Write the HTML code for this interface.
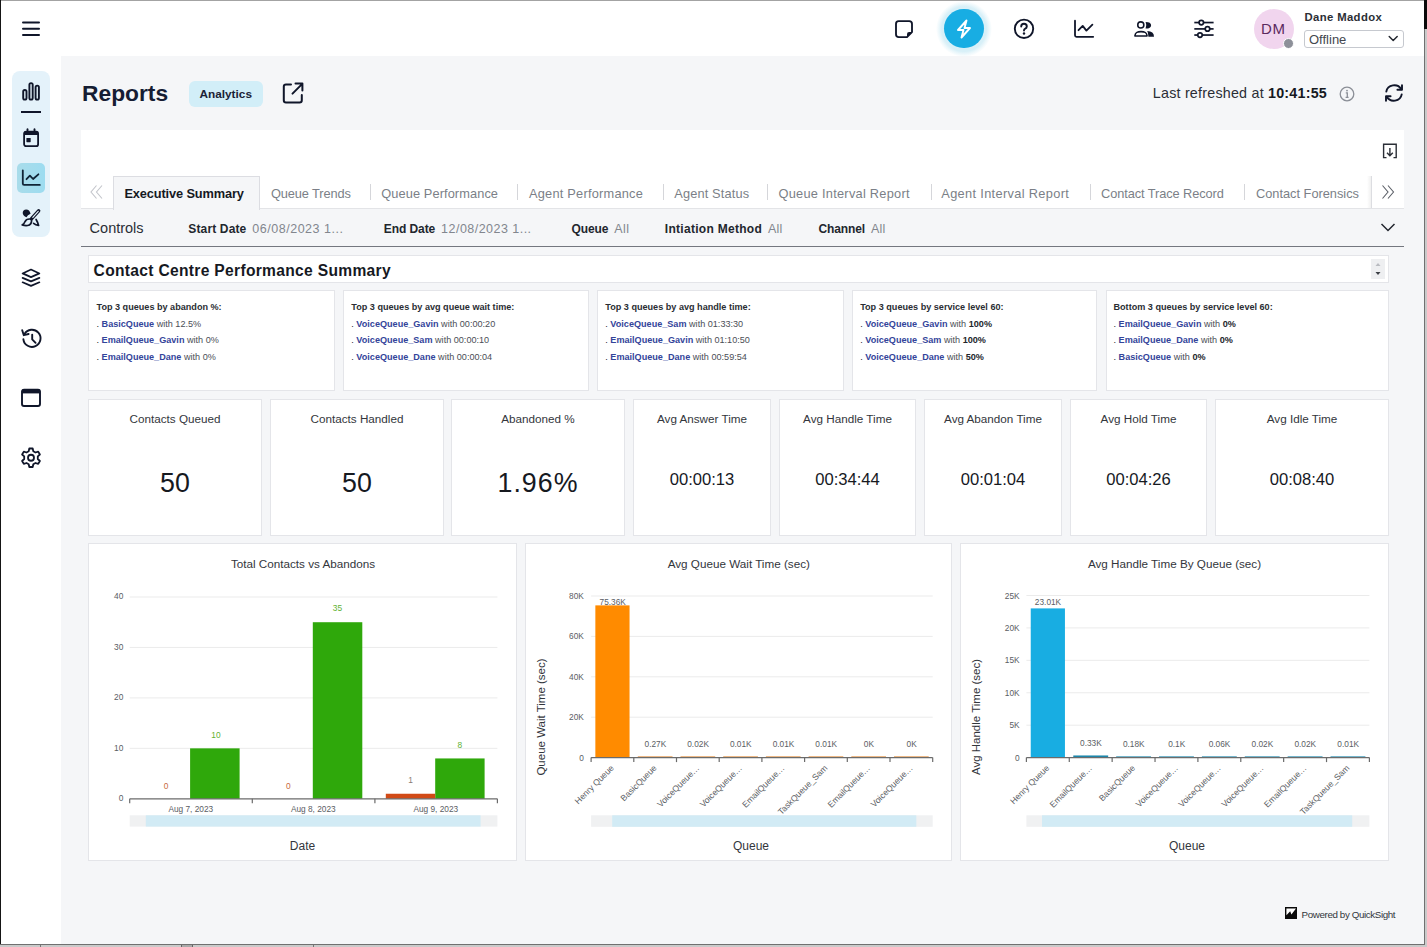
<!DOCTYPE html>
<html><head><meta charset="utf-8">
<style>
*{margin:0;padding:0;box-sizing:border-box}
html,body{width:1427px;height:947px;overflow:hidden;background:#d6d6d6;font-family:"Liberation Sans",sans-serif;color:#16191f;position:relative}
.a{position:absolute}
.t{position:absolute;white-space:nowrap;line-height:1}
svg{position:absolute;overflow:visible}
.card{position:absolute;background:#fff;border:1px solid #e4e5e9}
</style></head><body>
<div class="a" style="left:0;top:0;width:1425px;height:945px;background:#f5f6f8"></div>
<div class="a" style="left:0;top:0;width:1425px;height:56px;background:#fff"></div>
<div class="a" style="left:0;top:56px;width:60.5px;height:889px;background:#fff"></div>
<!-- hamburger -->
<svg style="left:0;top:0" width="60" height="56"><g stroke="#10162a" stroke-width="2" stroke-linecap="round"><line x1="23" y1="22.4" x2="39" y2="22.4"/><line x1="23" y1="28.7" x2="39" y2="28.7"/><line x1="23" y1="34.9" x2="39" y2="34.9"/></g></svg>
<!-- header icons -->
<!-- note -->
<svg style="left:894px;top:19px" width="22" height="20" viewBox="0 0 22 20"><path d="M4.6 2.1 H15.2 Q18 2.1 18 4.9 V13.1 L13 18.1 H4.8 Q2 18.1 2 15.3 V4.9 Q2 2.1 4.6 2.1 Z" fill="none" stroke="#10162a" stroke-width="1.85" stroke-linejoin="round"/><path d="M18 13.1 L13 18.1 V15.2 Q13 13.1 15.1 13.1 Z" fill="#10162a"/></svg>
<!-- lightning circle -->
<div class="a" style="left:936px;top:0.65px;width:56px;height:56px;border-radius:50%;background:radial-gradient(circle closest-side,#d6eff8 0%,#d8f0f8 80%,rgba(230,245,250,0.7) 90%,rgba(255,255,255,0) 100%)"></div>
<div class="a" style="left:944.3px;top:9.05px;width:39.3px;height:39.3px;border-radius:50%;background:#18ade3"></div>
<svg style="left:953px;top:18px" width="22" height="22" viewBox="0 0 22 22"><path d="M13.5 2.5 L5 12 H10.5 L8.5 19.5 L17 10 H11.5 Z" fill="none" stroke="#fff" stroke-width="1.9" stroke-linejoin="round"/></svg>
<!-- help -->
<svg style="left:1013px;top:18px" width="22" height="22" viewBox="0 0 22 22"><circle cx="11" cy="10.8" r="9.2" fill="none" stroke="#10162a" stroke-width="1.9"/><path d="M8.2 8.6 Q8.2 5.8 11 5.8 Q13.8 5.8 13.8 8.4 Q13.8 10 11.9 10.8 Q11 11.2 11 12.6" fill="none" stroke="#10162a" stroke-width="1.9" stroke-linecap="round"/><circle cx="11" cy="15.5" r="1.2" fill="#10162a"/></svg>
<!-- chart -->
<svg style="left:1073px;top:19px" width="22" height="20" viewBox="0 0 22 20"><path d="M2 1.7 V16.3 Q2 17.8 3.5 17.8 H20.2" fill="none" stroke="#10162a" stroke-width="1.8" stroke-linecap="round" stroke-linejoin="round"/><path d="M5.5 11.2 L9.7 6.9 L13.4 11.6 L19.4 5.6" fill="none" stroke="#10162a" stroke-width="1.8" stroke-linecap="round" stroke-linejoin="round"/></svg>
<!-- people -->
<svg style="left:1133px;top:20px" width="22" height="19" viewBox="0 0 22 19"><circle cx="7.8" cy="4.9" r="3.05" fill="none" stroke="#10162a" stroke-width="1.55"/><path d="M1.9 15.9 C2.4 12.4 4 11.6 8 11.6 C12 11.6 13.6 12.4 14.1 15.9 Z" fill="none" stroke="#10162a" stroke-width="1.55" stroke-linejoin="round"/><path d="M12.6 1.9 Q18.1 1.9 18.1 5.25 Q18.1 8.6 12.6 8.6 Q14.1 5.25 12.6 1.9 Z" fill="#10162a"/><path d="M14.2 11.1 Q21 11.4 21 16.7 H15.4 Q15.4 13 14.2 11.1 Z" fill="#10162a"/></svg>
<!-- sliders -->
<svg style="left:1193px;top:19px" width="22" height="20" viewBox="0 0 22 20"><g stroke="#10162a" stroke-width="1.7" fill="#fff"><line x1="1.3" y1="3.55" x2="20.6" y2="3.55"/><line x1="1.3" y1="9.9" x2="20.6" y2="9.9"/><line x1="1.3" y1="16.05" x2="20.6" y2="16.05"/><circle cx="8.3" cy="3.55" r="2.25"/><circle cx="14.5" cy="9.9" r="2.25"/><circle cx="7.0" cy="16.05" r="2.25"/></g></svg>
<!-- avatar -->
<div class="a" style="left:1254px;top:9px;width:40px;height:40px;border-radius:50%;background:#f1d5ee"></div>
<div class="t" style="left:1261px;top:20.8px;font-size:15px;letter-spacing:0.7px;color:#5b2a5e">DM</div>
<div class="a" style="left:1282.5px;top:37.5px;width:11px;height:11px;border-radius:50%;background:#8d9099;border:1px solid #fff"></div>
<div class="t" style="left:1304.5px;top:12.1px;font-size:11.3px;letter-spacing:0.38px;font-weight:bold;color:#2b2e35">Dane Maddox</div>
<div class="a" style="left:1304px;top:30px;width:100px;height:18px;border:1px solid #c6c9cf;border-radius:3px;background:#fff"></div>
<div class="t" style="left:1309px;top:32.5px;font-size:13px;color:#44474e">Offline</div>
<svg style="left:1387px;top:34px" width="12" height="9" viewBox="0 0 12 9"><path d="M2.2 2.4 L6.2 6.4 L10.2 2.4" fill="none" stroke="#22262e" stroke-width="1.45" stroke-linecap="round" stroke-linejoin="round"/></svg>


<!-- sidebar pill -->
<div class="a" style="left:12px;top:71px;width:38px;height:166px;border-radius:8px;background:#e4f2fa"></div>
<!-- bars icon -->
<svg style="left:20px;top:80px" width="22" height="35" viewBox="0 0 22 35"><g fill="none" stroke="#10162a" stroke-width="1.9"><rect x="3.2" y="10" width="3.3" height="9.6" rx="1.6"/><rect x="9.4" y="3.1" width="3.3" height="16.5" rx="1.6"/><rect x="15.6" y="5.6" width="3.3" height="14" rx="1.6"/></g><rect x="1" y="31" width="20" height="2" fill="#10162a"/></svg>
<!-- calendar -->
<svg style="left:22px;top:128px" width="18" height="20" viewBox="0 0 18 20"><rect x="2.1" y="3.6" width="14" height="14.6" rx="2" fill="none" stroke="#10162a" stroke-width="1.8"/><rect x="2.1" y="3.6" width="14" height="3.4" fill="#10162a"/><line x1="5.5" y1="1.2" x2="5.5" y2="4" stroke="#10162a" stroke-width="1.8" stroke-linecap="round"/><line x1="12.5" y1="1.2" x2="12.5" y2="4" stroke="#10162a" stroke-width="1.8" stroke-linecap="round"/><rect x="4.4" y="9.9" width="4.3" height="4.3" rx="0.6" fill="#10162a"/></svg>
<!-- selected -->
<div class="a" style="left:16.8px;top:163px;width:28.5px;height:29.7px;border-radius:5px;background:linear-gradient(to right,#a9dcea,#9ddcf0)"></div>
<svg style="left:21px;top:169px" width="20" height="18" viewBox="0 0 20 18"><path d="M1.8 1.3 V14.6 Q1.8 15.9 3.1 15.9 H18.8" fill="none" stroke="#0f2436" stroke-width="1.8" stroke-linecap="round" stroke-linejoin="round"/><path d="M5.5 10.2 L8.9 6.6 L12.1 10 L17.4 5.3" fill="none" stroke="#0f2436" stroke-width="1.8" stroke-linecap="round" stroke-linejoin="round"/></svg>
<!-- brush -->
<svg style="left:16px;top:204px" width="30" height="28" viewBox="0 0 30 28"><path d="M10.2 5.4 Q6.8 5.4 6.7 8.9 Q6.9 11.6 10.5 13.3 Q11.4 10.8 14.6 9.8 Q13.6 5.4 10.2 5.4 Z" fill="#10162a"/><line x1="22.6" y1="6.9" x2="15.6" y2="14.6" stroke="#10162a" stroke-width="3.6" stroke-linecap="round"/><line x1="22.2" y1="7.3" x2="16.8" y2="13.3" stroke="#e4f2fa" stroke-width="1.2" stroke-linecap="round"/><path d="M15 15.2 Q10.6 14.3 8.9 17.8 Q8 20.3 6.2 20.9 Q9 21.9 11.6 21.5 Q15.6 20.6 15.6 16.4 Z" fill="none" stroke="#10162a" stroke-width="1.7" stroke-linejoin="round"/><path d="M20.1 15.5 Q21.6 18 22.6 21.4 Q19.6 20.9 17.6 19.3" fill="none" stroke="#10162a" stroke-width="1.7" stroke-linecap="round" stroke-linejoin="round"/></svg>
<!-- layers -->
<svg style="left:20px;top:268px" width="22" height="20" viewBox="0 0 22 20"><g fill="none" stroke="#10162a" stroke-width="1.7" stroke-linejoin="round" stroke-linecap="round"><path d="M11 1.6 L19.4 5.4 L11 9.1 L2.6 5.4 Z"/><path d="M2.6 9.9 L11 13.4 L19.4 9.9"/><path d="M2.6 14.3 L11 17.9 L19.4 14.3"/></g></svg>
<!-- history -->
<svg style="left:20.5px;top:327.5px" width="22" height="22" viewBox="0 0 22 22"><path d="M3.5 6 A8.6 8.6 0 1 1 2.4 11.3" fill="none" stroke="#10162a" stroke-width="1.9" stroke-linecap="round"/><path d="M1.2 2.2 L2.8 7.2 L7.6 6" fill="none" stroke="#10162a" stroke-width="1.9" stroke-linecap="round" stroke-linejoin="round"/><path d="M11.2 6.6 V11.4 L14.6 14.8" fill="none" stroke="#10162a" stroke-width="1.9" stroke-linecap="round" stroke-linejoin="round"/></svg>
<!-- window -->
<svg style="left:20px;top:388px" width="22" height="20" viewBox="0 0 22 20"><rect x="2" y="1.6" width="18" height="16.4" rx="2" fill="none" stroke="#10162a" stroke-width="1.9"/><rect x="2" y="1.6" width="18" height="3.8" fill="#10162a"/></svg>
<!-- gear -->
<svg style="left:20px;top:447px" width="22" height="22" viewBox="0 0 22 22"><path d="M9.3 1.5 H12.7 L13.3 4.3 L15.5 5.5 L18.2 4.6 L19.9 7.5 L17.8 9.4 V12 L19.9 14 L18.2 16.9 L15.5 16 L13.3 17.2 L12.7 20 H9.3 L8.7 17.2 L6.5 16 L3.8 16.9 L2.1 14 L4.2 12 V9.4 L2.1 7.5 L3.8 4.6 L6.5 5.5 L8.7 4.3 Z" fill="none" stroke="#10162a" stroke-width="1.8" stroke-linejoin="round"/><circle cx="11" cy="10.75" r="3" fill="none" stroke="#10162a" stroke-width="1.8"/></svg>

<!-- Reports row -->
<div class="t" style="left:82px;top:81.5px;font-size:22.8px;font-weight:bold;color:#161d33">Reports</div>
<div class="a" style="left:189px;top:81px;width:74px;height:26px;border-radius:6px;background:#d2eef8"></div>
<div class="t" style="left:199.5px;top:89px;font-size:11.8px;font-weight:bold;color:#1b2236">Analytics</div>
<svg style="left:281px;top:81px" width="24" height="24" viewBox="0 0 24 24"><path d="M10 3.4 H5 Q2.8 3.4 2.8 5.6 V19.2 Q2.8 21.4 5 21.4 H18.6 Q20.8 21.4 20.8 19.2 V14" fill="none" stroke="#10162a" stroke-width="2" stroke-linecap="round"/><path d="M11.5 12.6 L21 3.1 M14.5 2.6 H21.4 V9.5" fill="none" stroke="#10162a" stroke-width="2" stroke-linecap="round" stroke-linejoin="round"/></svg>
<div class="t" style="left:1152.8px;top:85.9px;font-size:14.3px;letter-spacing:0.22px;color:#2a2d35">Last refreshed at <b style="color:#16191f">10:41:55</b></div>
<svg style="left:1338px;top:85px" width="18" height="18" viewBox="0 0 18 18"><circle cx="9" cy="9" r="6.8" fill="none" stroke="#8b8f97" stroke-width="1.3"/><circle cx="9" cy="5.6" r="0.9" fill="#8b8f97"/><path d="M7.8 7.8 H9.3 V12.2 M7.6 12.3 H10.6" fill="none" stroke="#8b8f97" stroke-width="1.3"/></svg>
<svg style="left:1383px;top:83px" width="22" height="20" viewBox="0 0 22 20"><path d="M3.3 8.6 A8 7.6 0 0 1 18.2 6.2" fill="none" stroke="#10162a" stroke-width="1.9" stroke-linecap="round"/><path d="M19 2.2 V6.8 H14.4" fill="none" stroke="#10162a" stroke-width="1.9" stroke-linecap="round" stroke-linejoin="round"/><path d="M18.7 11.4 A8 7.6 0 0 1 3.8 13.8" fill="none" stroke="#10162a" stroke-width="1.9" stroke-linecap="round"/><path d="M3 17.8 V13.2 H7.6" fill="none" stroke="#10162a" stroke-width="1.9" stroke-linecap="round" stroke-linejoin="round"/></svg>


<div class="a" style="left:81px;top:130px;width:1323px;height:78px;background:#fff"></div>
<div class="a" style="left:81px;top:208px;width:1323px;height:1px;background:#e3e4e7"></div>
<div class="a" style="left:113px;top:176px;width:147px;height:34px;background:#f5f6f8;border:1px solid #dcdde2;border-bottom:none"></div>
<div class="a" style="left:370px;top:184px;width:1px;height:16px;background:#d5d6da"></div>
<div class="a" style="left:517px;top:184px;width:1px;height:16px;background:#d5d6da"></div>
<div class="a" style="left:663px;top:184px;width:1px;height:16px;background:#d5d6da"></div>
<div class="a" style="left:767px;top:184px;width:1px;height:16px;background:#d5d6da"></div>
<div class="a" style="left:931px;top:184px;width:1px;height:16px;background:#d5d6da"></div>
<div class="a" style="left:1090px;top:184px;width:1px;height:16px;background:#d5d6da"></div>
<div class="a" style="left:1244px;top:184px;width:1px;height:16px;background:#d5d6da"></div>
<div class="a" style="left:1367px;top:176px;width:4px;height:32px;background:linear-gradient(to right,rgba(0,0,0,0),rgba(0,0,0,0.06))"></div>
<div class="a" style="left:1371px;top:176px;width:1px;height:32px;background:#dcdde1"></div>
<svg style="left:88px;top:183px" width="18" height="18" viewBox="0 0 18 18"><path d="M8.5 2.5 L3 9 L8.5 15.5 M14 2.5 L8.5 9 L14 15.5" fill="none" stroke="#c3c5cb" stroke-width="1.1"/></svg>
<svg style="left:1379px;top:183px" width="18" height="18" viewBox="0 0 18 18"><path d="M3.5 2.5 L9 9 L3.5 15.5 M9 2.5 L14.5 9 L9 15.5" fill="none" stroke="#5b5f67" stroke-width="1.1"/></svg>
<svg style="left:1382px;top:143px" width="16" height="16" viewBox="0 0 16 16"><path d="M4 1.3 H14.2 V14.6 H11.5 M4.5 14.6 H1.6 V1.3 H4" fill="none" stroke="#2a2e36" stroke-width="1.4"/><path d="M7.9 5 V12.6 M5 9.8 L7.9 12.8 L10.8 9.8" fill="none" stroke="#2a2e36" stroke-width="1.4"/></svg>
<svg style="left:1380px;top:221px" width="16" height="12" viewBox="0 0 16 12"><path d="M1.5 3 L8 9.5 L14.5 3" fill="none" stroke="#22262e" stroke-width="1.5"/></svg>
<div class="a" style="left:81px;top:246px;width:1323px;height:1px;background:#74777f"></div>
<div class="card" style="left:88px;top:255px;width:1301px;height:28px"></div>
<div class="a" style="left:1371px;top:259px;width:14px;height:20px;background:#eeeff1"></div>
<svg style="left:1371px;top:259px" width="14" height="20" viewBox="0 0 14 20"><path d="M4.5 7 L7 4 L9.5 7 Z" fill="#b9bbc0"/><path d="M4.5 13 L7 16 L9.5 13 Z" fill="#3c3f45"/></svg>
<div class="card" style="left:88px;top:290px;width:247px;height:101px"></div>
<div class="card" style="left:343px;top:290px;width:246px;height:101px"></div>
<div class="card" style="left:597px;top:290px;width:247px;height:101px"></div>
<div class="card" style="left:852px;top:290px;width:245px;height:101px"></div>
<div class="card" style="left:1106px;top:290px;width:283px;height:101px"></div>
<div class="card" style="left:88px;top:399px;width:174px;height:137px"></div>
<div class="card" style="left:270px;top:399px;width:174px;height:137px"></div>
<div class="card" style="left:451px;top:399px;width:174px;height:137px"></div>
<div class="card" style="left:633px;top:399px;width:138px;height:137px"></div>
<div class="card" style="left:779px;top:399px;width:137px;height:137px"></div>
<div class="card" style="left:924px;top:399px;width:138px;height:137px"></div>
<div class="card" style="left:1070px;top:399px;width:137px;height:137px"></div>
<div class="card" style="left:1215px;top:399px;width:174px;height:137px"></div>
<div class="card" style="left:88px;top:543px;width:429px;height:318px"></div>
<div class="card" style="left:525px;top:543px;width:427px;height:318px"></div>
<div class="card" style="left:960px;top:543px;width:429px;height:318px"></div>
<svg style="left:1285px;top:907px" width="12" height="12" viewBox="0 0 12 12"><rect x="0" y="0" width="12" height="12" fill="#0a0a0a"/><path d="M1.4 1.4 H11 L6.4 7.4 L5.2 4.3 L1.4 8.3 Z" fill="#fff"/></svg>
<svg style="left:0;top:0" width="1427" height="947" viewBox="0 0 1427 947" font-family="Liberation Sans"><line x1="129.70" y1="748.35" x2="497.40" y2="748.35" stroke="#ebebeb" stroke-width="1"/>
<line x1="129.70" y1="697.90" x2="497.40" y2="697.90" stroke="#ebebeb" stroke-width="1"/>
<line x1="129.70" y1="647.45" x2="497.40" y2="647.45" stroke="#ebebeb" stroke-width="1"/>
<line x1="129.70" y1="597.00" x2="497.40" y2="597.00" stroke="#ebebeb" stroke-width="1"/>
<text x="123.3" y="801.1" font-size="8.4" fill="#5a5d63" text-anchor="end" >0</text>
<text x="123.3" y="750.6" font-size="8.4" fill="#5a5d63" text-anchor="end" >10</text>
<text x="123.3" y="700.2" font-size="8.4" fill="#5a5d63" text-anchor="end" >20</text>
<text x="123.3" y="649.7" font-size="8.4" fill="#5a5d63" text-anchor="end" >30</text>
<text x="123.3" y="599.3" font-size="8.4" fill="#5a5d63" text-anchor="end" >40</text>
<rect x="190.10" y="748.35" width="49.50" height="50.45" fill="#2fa80b" />
<rect x="312.80" y="622.22" width="49.50" height="176.57" fill="#2fa80b" />
<rect x="435.20" y="758.44" width="49.40" height="40.36" fill="#2fa80b" />
<rect x="385.80" y="793.75" width="49.40" height="5.04" fill="#d14a16" />
<line x1="129.70" y1="798.80" x2="497.40" y2="798.80" stroke="#6b6b6b" stroke-width="1.3"/>
<line x1="129.70" y1="798.80" x2="129.70" y2="803.30" stroke="#6b6b6b" stroke-width="1.2"/>
<line x1="252.30" y1="798.80" x2="252.30" y2="803.30" stroke="#6b6b6b" stroke-width="1.2"/>
<line x1="374.90" y1="798.80" x2="374.90" y2="803.30" stroke="#6b6b6b" stroke-width="1.2"/>
<line x1="497.40" y1="798.80" x2="497.40" y2="803.30" stroke="#6b6b6b" stroke-width="1.2"/>
<text x="215.9" y="738.3" font-size="8.4" fill="#5fb233" text-anchor="middle" >10</text>
<text x="337.5" y="611.3" font-size="8.4" fill="#5fb233" text-anchor="middle" >35</text>
<text x="459.9" y="747.5" font-size="8.4" fill="#5fb233" text-anchor="middle" >8</text>
<text x="166.0" y="789.0" font-size="8.4" fill="#c8693c" text-anchor="middle" >0</text>
<text x="288.3" y="789.0" font-size="8.4" fill="#c8693c" text-anchor="middle" >0</text>
<text x="410.7" y="783.0" font-size="8.4" fill="#8a7b72" text-anchor="middle" >1</text>
<text x="190.8" y="812.4" font-size="8.3" fill="#5a5d63" text-anchor="middle" >Aug 7, 2023</text>
<text x="313.3" y="812.4" font-size="8.3" fill="#5a5d63" text-anchor="middle" >Aug 8, 2023</text>
<text x="435.8" y="812.4" font-size="8.3" fill="#5a5d63" text-anchor="middle" >Aug 9, 2023</text>
<rect x="129.70" y="815.30" width="367.70" height="11.30" fill="#f0f1f2" />
<rect x="145.80" y="815.30" width="334.80" height="11.30" fill="#d2ebf5" />
<text x="583.8" y="760.6" font-size="8.3" fill="#5a5d63" text-anchor="end" >0</text>
<line x1="591.10" y1="717.20" x2="932.70" y2="717.20" stroke="#ebebeb" stroke-width="1"/>
<text x="583.8" y="720.2" font-size="8.3" fill="#5a5d63" text-anchor="end" >20K</text>
<line x1="591.10" y1="676.80" x2="932.70" y2="676.80" stroke="#ebebeb" stroke-width="1"/>
<text x="583.8" y="679.8" font-size="8.3" fill="#5a5d63" text-anchor="end" >40K</text>
<line x1="591.10" y1="636.40" x2="932.70" y2="636.40" stroke="#ebebeb" stroke-width="1"/>
<text x="583.8" y="639.4" font-size="8.3" fill="#5a5d63" text-anchor="end" >60K</text>
<line x1="591.10" y1="596.00" x2="932.70" y2="596.00" stroke="#ebebeb" stroke-width="1"/>
<text x="583.8" y="599.0" font-size="8.3" fill="#5a5d63" text-anchor="end" >80K</text>
<rect x="595.35" y="605.37" width="34.20" height="152.23" fill="#ff8b00" />
<text x="612.7" y="604.6" font-size="8.3" fill="#5a5d63" text-anchor="middle" >75.36K</text>
<rect x="637.80" y="756.40" width="34.70" height="1.20" fill="#e08a35" />
<text x="655.4" y="746.9" font-size="8.3" fill="#5a5d63" text-anchor="middle" >0.27K</text>
<rect x="680.50" y="756.40" width="34.70" height="1.20" fill="#e08a35" />
<text x="698.1" y="746.9" font-size="8.3" fill="#5a5d63" text-anchor="middle" >0.02K</text>
<rect x="723.20" y="756.40" width="34.70" height="1.20" fill="#e08a35" />
<text x="740.8" y="746.9" font-size="8.3" fill="#5a5d63" text-anchor="middle" >0.01K</text>
<rect x="765.90" y="756.40" width="34.70" height="1.20" fill="#e08a35" />
<text x="783.5" y="746.9" font-size="8.3" fill="#5a5d63" text-anchor="middle" >0.01K</text>
<rect x="808.60" y="756.40" width="34.70" height="1.20" fill="#e08a35" />
<text x="826.2" y="746.9" font-size="8.3" fill="#5a5d63" text-anchor="middle" >0.01K</text>
<rect x="851.30" y="756.40" width="34.70" height="1.20" fill="#e08a35" />
<text x="868.9" y="746.9" font-size="8.3" fill="#5a5d63" text-anchor="middle" >0K</text>
<rect x="894.00" y="756.40" width="34.70" height="1.20" fill="#e08a35" />
<text x="911.6" y="746.9" font-size="8.3" fill="#5a5d63" text-anchor="middle" >0K</text>
<line x1="591.10" y1="757.60" x2="932.70" y2="757.60" stroke="#6b6b6b" stroke-width="1.3"/>
<line x1="591.10" y1="757.60" x2="591.10" y2="762.10" stroke="#6b6b6b" stroke-width="1.2"/>
<line x1="633.80" y1="757.60" x2="633.80" y2="762.10" stroke="#6b6b6b" stroke-width="1.2"/>
<line x1="676.50" y1="757.60" x2="676.50" y2="762.10" stroke="#6b6b6b" stroke-width="1.2"/>
<line x1="719.20" y1="757.60" x2="719.20" y2="762.10" stroke="#6b6b6b" stroke-width="1.2"/>
<line x1="761.90" y1="757.60" x2="761.90" y2="762.10" stroke="#6b6b6b" stroke-width="1.2"/>
<line x1="804.60" y1="757.60" x2="804.60" y2="762.10" stroke="#6b6b6b" stroke-width="1.2"/>
<line x1="847.30" y1="757.60" x2="847.30" y2="762.10" stroke="#6b6b6b" stroke-width="1.2"/>
<line x1="890.00" y1="757.60" x2="890.00" y2="762.10" stroke="#6b6b6b" stroke-width="1.2"/>
<line x1="932.70" y1="757.60" x2="932.70" y2="762.10" stroke="#6b6b6b" stroke-width="1.2"/>
<text x="614.5" y="768.6" font-size="8.6" fill="#5a5d63" text-anchor="end" transform="rotate(-45 614.5 768.6)">Henry Queue</text>
<text x="657.2" y="768.6" font-size="8.6" fill="#5a5d63" text-anchor="end" transform="rotate(-45 657.2 768.6)">BasicQueue</text>
<text x="699.9" y="768.6" font-size="8.6" fill="#5a5d63" text-anchor="end" transform="rotate(-45 699.9 768.6)">VoiceQueue…</text>
<text x="742.6" y="768.6" font-size="8.6" fill="#5a5d63" text-anchor="end" transform="rotate(-45 742.6 768.6)">VoiceQueue…</text>
<text x="785.2" y="768.6" font-size="8.6" fill="#5a5d63" text-anchor="end" transform="rotate(-45 785.2 768.6)">EmailQueue…</text>
<text x="828.0" y="768.6" font-size="8.6" fill="#5a5d63" text-anchor="end" transform="rotate(-45 828.0 768.6)">TaskQueue_Sam</text>
<text x="870.7" y="768.6" font-size="8.6" fill="#5a5d63" text-anchor="end" transform="rotate(-45 870.7 768.6)">EmailQueue…</text>
<text x="913.4" y="768.6" font-size="8.6" fill="#5a5d63" text-anchor="end" transform="rotate(-45 913.4 768.6)">VoiceQueue…</text>
<text x="541" y="717" font-size="11.5" fill="#33363c" text-anchor="middle" transform="rotate(-90 541 717)" dy="4">Queue Wait Time (sec)</text>
<rect x="591.10" y="815.30" width="341.60" height="11.50" fill="#f0f1f2" />
<rect x="612.20" y="815.30" width="304.10" height="11.50" fill="#d2ebf5" />
<text x="1019.6" y="760.6" font-size="8.3" fill="#5a5d63" text-anchor="end" >0</text>
<line x1="1026.40" y1="725.18" x2="1369.40" y2="725.18" stroke="#ebebeb" stroke-width="1"/>
<text x="1019.6" y="728.2" font-size="8.3" fill="#5a5d63" text-anchor="end" >5K</text>
<line x1="1026.40" y1="692.76" x2="1369.40" y2="692.76" stroke="#ebebeb" stroke-width="1"/>
<text x="1019.6" y="695.8" font-size="8.3" fill="#5a5d63" text-anchor="end" >10K</text>
<line x1="1026.40" y1="660.34" x2="1369.40" y2="660.34" stroke="#ebebeb" stroke-width="1"/>
<text x="1019.6" y="663.3" font-size="8.3" fill="#5a5d63" text-anchor="end" >15K</text>
<line x1="1026.40" y1="627.92" x2="1369.40" y2="627.92" stroke="#ebebeb" stroke-width="1"/>
<text x="1019.6" y="630.9" font-size="8.3" fill="#5a5d63" text-anchor="end" >20K</text>
<line x1="1026.40" y1="595.50" x2="1369.40" y2="595.50" stroke="#ebebeb" stroke-width="1"/>
<text x="1019.6" y="598.5" font-size="8.3" fill="#5a5d63" text-anchor="end" >25K</text>
<rect x="1030.74" y="608.40" width="34.20" height="149.20" fill="#18ade2" />
<text x="1048.0" y="605.1" font-size="8.3" fill="#5a5d63" text-anchor="middle" >23.01K</text>
<rect x="1073.28" y="755.46" width="34.88" height="2.14" fill="#1c87ab" />
<text x="1090.9" y="746.0" font-size="8.3" fill="#5a5d63" text-anchor="middle" >0.33K</text>
<rect x="1116.15" y="756.40" width="34.88" height="1.20" fill="#1c87ab" />
<text x="1133.8" y="746.9" font-size="8.3" fill="#5a5d63" text-anchor="middle" >0.18K</text>
<rect x="1159.03" y="756.40" width="34.88" height="1.20" fill="#1c87ab" />
<text x="1176.7" y="746.9" font-size="8.3" fill="#5a5d63" text-anchor="middle" >0.1K</text>
<rect x="1201.90" y="756.40" width="34.88" height="1.20" fill="#1c87ab" />
<text x="1219.5" y="746.9" font-size="8.3" fill="#5a5d63" text-anchor="middle" >0.06K</text>
<rect x="1244.78" y="756.40" width="34.88" height="1.20" fill="#1c87ab" />
<text x="1262.4" y="746.9" font-size="8.3" fill="#5a5d63" text-anchor="middle" >0.02K</text>
<rect x="1287.65" y="756.40" width="34.88" height="1.20" fill="#1c87ab" />
<text x="1305.3" y="746.9" font-size="8.3" fill="#5a5d63" text-anchor="middle" >0.02K</text>
<rect x="1330.53" y="756.40" width="34.88" height="1.20" fill="#1c87ab" />
<text x="1348.2" y="746.9" font-size="8.3" fill="#5a5d63" text-anchor="middle" >0.01K</text>
<line x1="1026.40" y1="757.60" x2="1369.40" y2="757.60" stroke="#6b6b6b" stroke-width="1.3"/>
<line x1="1026.40" y1="757.60" x2="1026.40" y2="762.10" stroke="#6b6b6b" stroke-width="1.2"/>
<line x1="1069.28" y1="757.60" x2="1069.28" y2="762.10" stroke="#6b6b6b" stroke-width="1.2"/>
<line x1="1112.15" y1="757.60" x2="1112.15" y2="762.10" stroke="#6b6b6b" stroke-width="1.2"/>
<line x1="1155.03" y1="757.60" x2="1155.03" y2="762.10" stroke="#6b6b6b" stroke-width="1.2"/>
<line x1="1197.90" y1="757.60" x2="1197.90" y2="762.10" stroke="#6b6b6b" stroke-width="1.2"/>
<line x1="1240.78" y1="757.60" x2="1240.78" y2="762.10" stroke="#6b6b6b" stroke-width="1.2"/>
<line x1="1283.65" y1="757.60" x2="1283.65" y2="762.10" stroke="#6b6b6b" stroke-width="1.2"/>
<line x1="1326.53" y1="757.60" x2="1326.53" y2="762.10" stroke="#6b6b6b" stroke-width="1.2"/>
<line x1="1369.40" y1="757.60" x2="1369.40" y2="762.10" stroke="#6b6b6b" stroke-width="1.2"/>
<text x="1049.8" y="768.6" font-size="8.6" fill="#5a5d63" text-anchor="end" transform="rotate(-45 1049.8 768.6)">Henry Queue</text>
<text x="1092.7" y="768.6" font-size="8.6" fill="#5a5d63" text-anchor="end" transform="rotate(-45 1092.7 768.6)">EmailQueue…</text>
<text x="1135.6" y="768.6" font-size="8.6" fill="#5a5d63" text-anchor="end" transform="rotate(-45 1135.6 768.6)">BasicQueue</text>
<text x="1178.5" y="768.6" font-size="8.6" fill="#5a5d63" text-anchor="end" transform="rotate(-45 1178.5 768.6)">VoiceQueue…</text>
<text x="1221.3" y="768.6" font-size="8.6" fill="#5a5d63" text-anchor="end" transform="rotate(-45 1221.3 768.6)">VoiceQueue…</text>
<text x="1264.2" y="768.6" font-size="8.6" fill="#5a5d63" text-anchor="end" transform="rotate(-45 1264.2 768.6)">VoiceQueue…</text>
<text x="1307.1" y="768.6" font-size="8.6" fill="#5a5d63" text-anchor="end" transform="rotate(-45 1307.1 768.6)">EmailQueue…</text>
<text x="1350.0" y="768.6" font-size="8.6" fill="#5a5d63" text-anchor="end" transform="rotate(-45 1350.0 768.6)">TaskQueue_Sam</text>
<text x="976" y="717" font-size="11.5" fill="#33363c" text-anchor="middle" transform="rotate(-90 976 717)" dy="4">Avg Handle Time (sec)</text>
<rect x="1026.40" y="815.30" width="343.00" height="11.50" fill="#f0f1f2" />
<rect x="1042.00" y="815.30" width="310.20" height="11.50" fill="#d2ebf5" /></svg>
<div class="t" style="left:124.4px;top:187.97px;font-size:12.8px;font-weight:bold;color:#16191f;letter-spacing:-0.128px;">Executive Summary</div>
<div class="t" style="left:270.9px;top:187.97px;font-size:12.8px;font-weight:normal;color:#7b7f87;letter-spacing:-0.101px;">Queue Trends</div>
<div class="t" style="left:381.3px;top:187.97px;font-size:12.8px;font-weight:normal;color:#7b7f87;letter-spacing:0.091px;">Queue Performance</div>
<div class="t" style="left:529.0px;top:187.97px;font-size:12.8px;font-weight:normal;color:#7b7f87;letter-spacing:0.221px;">Agent Performance</div>
<div class="t" style="left:674.2px;top:187.97px;font-size:12.8px;font-weight:normal;color:#7b7f87;letter-spacing:0.156px;">Agent Status</div>
<div class="t" style="left:778.5px;top:187.97px;font-size:12.8px;font-weight:normal;color:#7b7f87;letter-spacing:0.254px;">Queue Interval Report</div>
<div class="t" style="left:941.3px;top:187.97px;font-size:12.8px;font-weight:normal;color:#7b7f87;letter-spacing:0.328px;">Agent Interval Report</div>
<div class="t" style="left:1101.1px;top:187.97px;font-size:12.8px;font-weight:normal;color:#7b7f87;letter-spacing:-0.089px;">Contact Trace Record</div>
<div class="t" style="left:1256.0px;top:187.97px;font-size:12.8px;font-weight:normal;color:#7b7f87;letter-spacing:-0.008px;">Contact Forensics</div>
<div class="t" style="left:89.6px;top:221.23px;font-size:14.5px;font-weight:normal;color:#2a2e36;letter-spacing:0.000px;">Controls</div>
<div class="t" style="left:188.3px;top:223.34px;font-size:12px;font-weight:bold;color:#22262e;letter-spacing:0.146px;">Start Date</div>
<div class="t" style="left:252.3px;top:222.92px;font-size:12.5px;font-weight:normal;color:#82868e;letter-spacing:0.521px;">06/08/2023 1...</div>
<div class="t" style="left:383.8px;top:223.34px;font-size:12px;font-weight:bold;color:#22262e;letter-spacing:-0.074px;">End Date</div>
<div class="t" style="left:441.1px;top:222.92px;font-size:12.5px;font-weight:normal;color:#82868e;letter-spacing:0.471px;">12/08/2023 1...</div>
<div class="t" style="left:571.6px;top:223.34px;font-size:12px;font-weight:bold;color:#22262e;letter-spacing:-0.136px;">Queue</div>
<div class="t" style="left:614.3px;top:222.92px;font-size:12.5px;font-weight:normal;color:#82868e;letter-spacing:0.397px;">All</div>
<div class="t" style="left:664.8px;top:223.34px;font-size:12px;font-weight:bold;color:#22262e;letter-spacing:0.290px;">Intiation Method</div>
<div class="t" style="left:768.0px;top:222.92px;font-size:12.5px;font-weight:normal;color:#82868e;letter-spacing:0.247px;">All</div>
<div class="t" style="left:818.5px;top:223.34px;font-size:12px;font-weight:bold;color:#22262e;letter-spacing:-0.107px;">Channel</div>
<div class="t" style="left:871.0px;top:222.92px;font-size:12.5px;font-weight:normal;color:#82868e;letter-spacing:0.247px;">All</div>
<div class="t" style="left:93.6px;top:262.70px;font-size:15.6px;font-weight:bold;color:#16191f;letter-spacing:0.308px;">Contact Centre Performance Summary</div>
<div class="t" style="left:96.5px;top:302.90px;font-size:9.1px;font-weight:bold;color:#2a2d33;">Top 3 queues by abandon %:</div>
<div class="t" style="left:96.5px;top:319.90px;font-size:9.1px;font-weight:normal;color:#4b4e56;"><span style="color:#22252b">.</span> <b style="color:#33449a;font-weight:bold">BasicQueue</b> with 12.5%</div>
<div class="t" style="left:96.5px;top:336.20px;font-size:9.1px;font-weight:normal;color:#4b4e56;"><span style="color:#22252b">.</span> <b style="color:#33449a;font-weight:bold">EmailQueue_Gavin</b> with 0%</div>
<div class="t" style="left:96.5px;top:352.50px;font-size:9.1px;font-weight:normal;color:#4b4e56;"><span style="color:#22252b">.</span> <b style="color:#33449a;font-weight:bold">EmailQueue_Dane</b> with 0%</div>
<div class="t" style="left:351.3px;top:302.90px;font-size:9.1px;font-weight:bold;color:#2a2d33;">Top 3 queues by avg queue wait time:</div>
<div class="t" style="left:351.3px;top:319.90px;font-size:9.1px;font-weight:normal;color:#4b4e56;"><span style="color:#22252b">.</span> <b style="color:#33449a;font-weight:bold">VoiceQueue_Gavin</b> with 00:00:20</div>
<div class="t" style="left:351.3px;top:336.20px;font-size:9.1px;font-weight:normal;color:#4b4e56;"><span style="color:#22252b">.</span> <b style="color:#33449a;font-weight:bold">VoiceQueue_Sam</b> with 00:00:10</div>
<div class="t" style="left:351.3px;top:352.50px;font-size:9.1px;font-weight:normal;color:#4b4e56;"><span style="color:#22252b">.</span> <b style="color:#33449a;font-weight:bold">VoiceQueue_Dane</b> with 00:00:04</div>
<div class="t" style="left:605.3px;top:302.90px;font-size:9.1px;font-weight:bold;color:#2a2d33;">Top 3 queues by avg handle time:</div>
<div class="t" style="left:605.3px;top:319.90px;font-size:9.1px;font-weight:normal;color:#4b4e56;"><span style="color:#22252b">.</span> <b style="color:#33449a;font-weight:bold">VoiceQueue_Sam</b> with 01:33:30</div>
<div class="t" style="left:605.3px;top:336.20px;font-size:9.1px;font-weight:normal;color:#4b4e56;"><span style="color:#22252b">.</span> <b style="color:#33449a;font-weight:bold">EmailQueue_Gavin</b> with 01:10:50</div>
<div class="t" style="left:605.3px;top:352.50px;font-size:9.1px;font-weight:normal;color:#4b4e56;"><span style="color:#22252b">.</span> <b style="color:#33449a;font-weight:bold">EmailQueue_Dane</b> with 00:59:54</div>
<div class="t" style="left:860.2px;top:302.90px;font-size:9.1px;font-weight:bold;color:#2a2d33;">Top 3 queues by service level 60:</div>
<div class="t" style="left:860.2px;top:319.90px;font-size:9.1px;font-weight:normal;color:#4b4e56;"><span style="color:#22252b">.</span> <b style="color:#33449a;font-weight:bold">VoiceQueue_Gavin</b> with <b style="color:#22252b">100%</b></div>
<div class="t" style="left:860.2px;top:336.20px;font-size:9.1px;font-weight:normal;color:#4b4e56;"><span style="color:#22252b">.</span> <b style="color:#33449a;font-weight:bold">VoiceQueue_Sam</b> with <b style="color:#22252b">100%</b></div>
<div class="t" style="left:860.2px;top:352.50px;font-size:9.1px;font-weight:normal;color:#4b4e56;"><span style="color:#22252b">.</span> <b style="color:#33449a;font-weight:bold">VoiceQueue_Dane</b> with <b style="color:#22252b">50%</b></div>
<div class="t" style="left:1113.5px;top:302.90px;font-size:9.1px;font-weight:bold;color:#2a2d33;">Bottom 3 queues by service level 60:</div>
<div class="t" style="left:1113.5px;top:319.90px;font-size:9.1px;font-weight:normal;color:#4b4e56;"><span style="color:#22252b">.</span> <b style="color:#33449a;font-weight:bold">EmailQueue_Gavin</b> with <b style="color:#22252b">0%</b></div>
<div class="t" style="left:1113.5px;top:336.20px;font-size:9.1px;font-weight:normal;color:#4b4e56;"><span style="color:#22252b">.</span> <b style="color:#33449a;font-weight:bold">EmailQueue_Dane</b> with <b style="color:#22252b">0%</b></div>
<div class="t" style="left:1113.5px;top:352.50px;font-size:9.1px;font-weight:normal;color:#4b4e56;"><span style="color:#22252b">.</span> <b style="color:#33449a;font-weight:bold">BasicQueue</b> with <b style="color:#22252b">0%</b></div>
<div class="t" style="left:-125.0px;width:600px;text-align:center;top:413.10px;font-size:11.7px;font-weight:normal;color:#33363c;">Contacts Queued</div>
<div class="t" style="left:-125.0px;width:600px;text-align:center;top:469.62px;font-size:26.8px;font-weight:normal;color:#16191f;">50</div>
<div class="t" style="left:57.0px;width:600px;text-align:center;top:413.10px;font-size:11.7px;font-weight:normal;color:#33363c;">Contacts Handled</div>
<div class="t" style="left:57.0px;width:600px;text-align:center;top:469.62px;font-size:26.8px;font-weight:normal;color:#16191f;">50</div>
<div class="t" style="left:238.0px;width:600px;text-align:center;top:413.10px;font-size:11.7px;font-weight:normal;color:#33363c;">Abandoned %</div>
<div class="t" style="left:238.0px;width:600px;text-align:center;top:469.62px;font-size:26.8px;font-weight:normal;color:#16191f;letter-spacing:1.004px;">1.96%</div>
<div class="t" style="left:402.0px;width:600px;text-align:center;top:413.10px;font-size:11.7px;font-weight:normal;color:#33363c;">Avg Answer Time</div>
<div class="t" style="left:402.0px;width:600px;text-align:center;top:472.15px;font-size:16.6px;font-weight:normal;color:#16191f;">00:00:13</div>
<div class="t" style="left:547.5px;width:600px;text-align:center;top:413.10px;font-size:11.7px;font-weight:normal;color:#33363c;">Avg Handle Time</div>
<div class="t" style="left:547.5px;width:600px;text-align:center;top:472.15px;font-size:16.6px;font-weight:normal;color:#16191f;">00:34:44</div>
<div class="t" style="left:693.0px;width:600px;text-align:center;top:413.10px;font-size:11.7px;font-weight:normal;color:#33363c;">Avg Abandon Time</div>
<div class="t" style="left:693.0px;width:600px;text-align:center;top:472.15px;font-size:16.6px;font-weight:normal;color:#16191f;">00:01:04</div>
<div class="t" style="left:838.5px;width:600px;text-align:center;top:413.10px;font-size:11.7px;font-weight:normal;color:#33363c;">Avg Hold Time</div>
<div class="t" style="left:838.5px;width:600px;text-align:center;top:472.15px;font-size:16.6px;font-weight:normal;color:#16191f;">00:04:26</div>
<div class="t" style="left:1002.0px;width:600px;text-align:center;top:413.10px;font-size:11.7px;font-weight:normal;color:#33363c;">Avg Idle Time</div>
<div class="t" style="left:1002.0px;width:600px;text-align:center;top:472.15px;font-size:16.6px;font-weight:normal;color:#16191f;">00:08:40</div>
<div class="t" style="left:3.0px;width:600px;text-align:center;top:558.10px;font-size:11.7px;font-weight:normal;color:#33363c;">Total Contacts vs Abandons</div>
<div class="t" style="left:438.8px;width:600px;text-align:center;top:558.10px;font-size:11.7px;font-weight:normal;color:#33363c;">Avg Queue Wait Time (sec)</div>
<div class="t" style="left:874.5px;width:600px;text-align:center;top:558.10px;font-size:11.7px;font-weight:normal;color:#33363c;">Avg Handle Time By Queue (sec)</div>
<div class="t" style="left:2.5px;width:600px;text-align:center;top:839.84px;font-size:12px;font-weight:normal;color:#33363c;">Date</div>
<div class="t" style="left:451.0px;width:600px;text-align:center;top:839.84px;font-size:12px;font-weight:normal;color:#33363c;">Queue</div>
<div class="t" style="left:887.0px;width:600px;text-align:center;top:839.84px;font-size:12px;font-weight:normal;color:#33363c;">Queue</div>
<div class="t" style="left:1301.6px;top:910.01px;font-size:9.8px;font-weight:normal;color:#33363c;letter-spacing:-0.392px;">Powered by QuickSight</div>
<div class="a" style="left:0;top:0;width:1425px;height:1px;background:#a3a3a3"></div>
<div class="a" style="left:0;top:0;width:1px;height:945px;background:#151515"></div>
<div class="a" style="left:1424px;top:0;width:3px;height:947px;background:#cacaca"></div>
<div class="a" style="left:1424px;top:0;width:1px;height:945px;background:#707070"></div>
<div class="a" style="left:1424px;top:0;width:3px;height:29px;background:#0a0a0a"></div>
<div class="a" style="left:0;top:945px;width:1427px;height:2px;background:#cacaca"></div>
<div class="a" style="left:40px;top:945px;width:1px;height:2px;background:#777"></div>
<div class="a" style="left:181px;top:945px;width:12px;height:2px;background:#aaa"></div>
<div class="a" style="left:181px;top:945px;width:1px;height:2px;background:#666"></div>
<div class="a" style="left:192px;top:945px;width:1px;height:2px;background:#666"></div>
<div class="a" style="left:313px;top:945px;width:1px;height:2px;background:#777"></div>
<div class="a" style="left:0;top:944px;width:1425px;height:1px;background:#707070"></div>
</body></html>
